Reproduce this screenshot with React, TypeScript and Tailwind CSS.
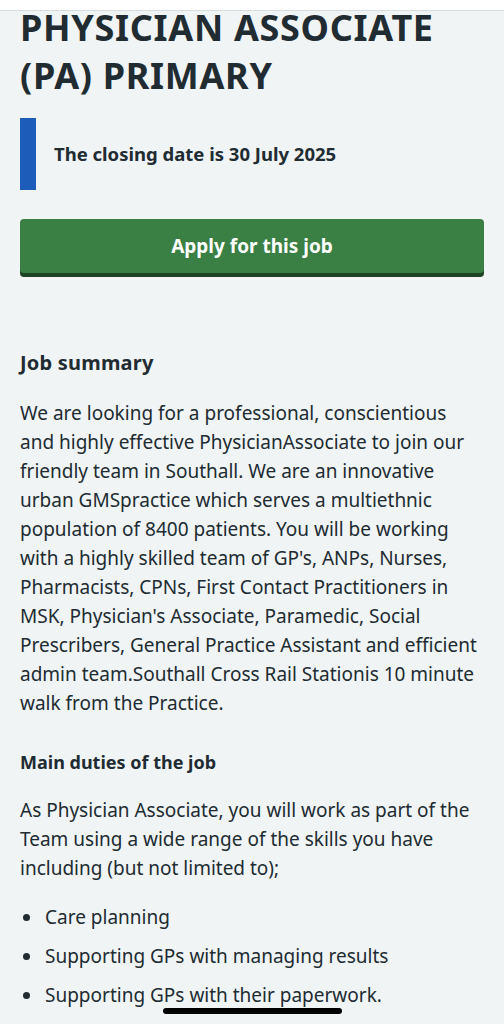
import React from "react";

const SUMMARY =
  "We are looking for a professional, conscientious and highly effective PhysicianAssociate to join our friendly team in Southall. We are an innovative urban GMSpractice which serves a multiethnic population of 8400 patients. You will be working with a highly skilled team of GP's, ANPs, Nurses, Pharmacists, CPNs, First Contact Practitioners in MSK, Physician's Associate, Paramedic, Social Prescribers, General Practice Assistant and efficient admin team.Southall Cross Rail Stationis 10 minute walk from the Practice.";

const DUTIES = [
  "Care planning",
  "Supporting GPs with managing results",
  "Supporting GPs with their paperwork.",
];

export default function App() {
  return (
    <div className="min-h-screen overflow-hidden bg-[#f0f4f5] font-['Noto_Sans',sans-serif] text-[#212b32]">
      {/* browser header peeking in at the top */}
      <div className="fixed inset-x-0 top-0 z-10 h-[11px] border-b border-[#d8dde0] bg-white" />

      <main className="px-5 pt-[4px]">
        <h1 className="text-[36px] font-bold leading-[48px] tracking-[0.7px]">
          PHYSICIAN ASSOCIATE (PA) PRIMARY
        </h1>

        <div className="mt-[18px] flex h-[72px] items-center border-l-[16px] border-[#1d5cb8] pl-[18px]">
          <p className="text-[18.5px] font-bold leading-[28px]">
            The closing date is 30 July 2025
          </p>
        </div>

        <button className="mt-[29px] flex h-[54px] w-full items-center justify-center rounded-[4px] bg-[#3a7f43] text-[19px] font-bold text-white shadow-[0_4px_0_#1c4322]">
          Apply for this job
        </button>

        <section className="mt-[76px]">
          <h2 className="text-[20px] font-bold leading-[28px] tracking-[0.2px]">
            Job summary
          </h2>
          <p className="mt-[22px] text-[19px] leading-[29px]">{SUMMARY}</p>
        </section>

        <section className="mt-[30px]">
          <h3 className="text-[18px] font-bold leading-[28px]">
            Main duties of the job
          </h3>
          <p className="mt-[20px] text-[19px] leading-[29px]">
            As Physician Associate, you will work as part of the Team using a
            wide range of the skills you have including (but not limited to);
          </p>
          <ul className="mt-[20px] flex flex-col gap-[10px] text-[19px] leading-[29px]">
            {DUTIES.map((d) => (
              <li key={d} className="flex items-center gap-[15px]">
                <span className="ml-[3px] h-[7px] w-[7px] shrink-0 rounded-full bg-[#212b32]" />
                {d}
              </li>
            ))}
          </ul>
        </section>
      </main>

      {/* home indicator */}
      <div className="fixed bottom-[10px] left-[163px] z-10 h-[6px] w-[179px] rounded-full bg-black" />
    </div>
  );
}
